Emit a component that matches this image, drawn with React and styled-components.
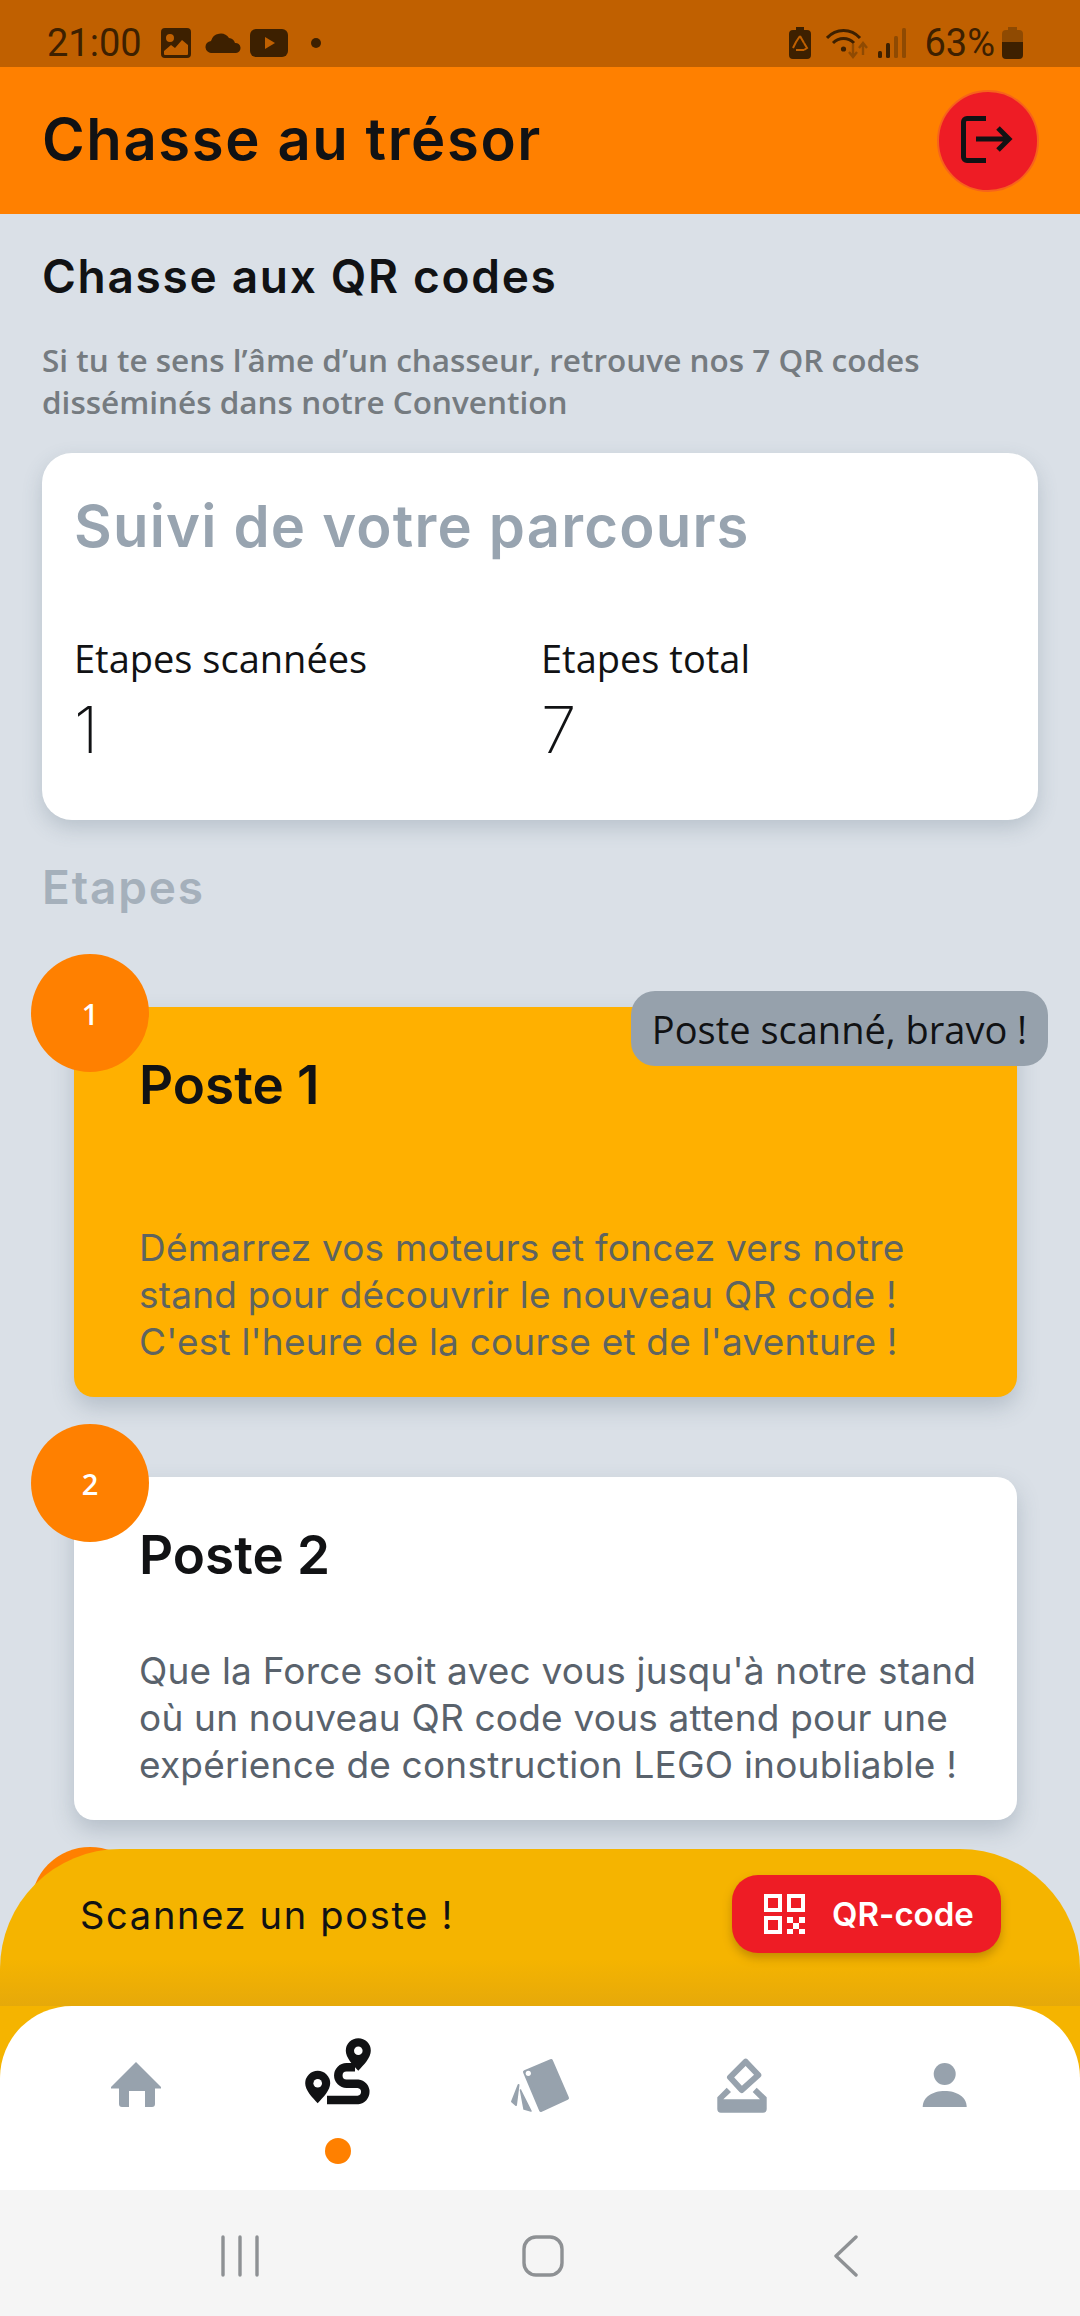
import React from 'react';
import styled, { createGlobalStyle } from 'styled-components';

const GlobalStyle = createGlobalStyle`
  * { box-sizing: border-box; }
  html, body { margin: 0; padding: 0; background: #dae0e7; }
  body { font-family: 'Open Sans', sans-serif; }
`;

const Screen = styled.div`
  width: 1080px;
  height: 2316px;
  display: flex;
  flex-direction: column;
  overflow: hidden;
  background: #dae0e7;
`;

const StatusBar = styled.div`
  height: 67px;
  flex: none;
  padding: 19px 57px 0 47px;
  background: #c06000;
  color: #3d2000;
  display: flex;
  align-items: center;
  justify-content: space-between;
  font: 400 38px Roboto, sans-serif;
`;

const StatusGroup = styled.div`
  display: flex;
  align-items: center;
`;

const StatusTime = styled.span`
  width: 113px;
`;

const StatusPercent = styled.span`
  margin: 0 7px 0 18px;
`;

const Header = styled.header`
  height: 147px;
  flex: none;
  padding: 0 42px;
  background: #ff8000;
  display: flex;
  align-items: center;
  justify-content: space-between;
`;

const HeaderTitle = styled.h1`
  margin: 0 0 3px;
  font: 600 58px/64px Inter, sans-serif;
  letter-spacing: 1.6px;
  color: #111214;
`;

const LogoutButton = styled.button`
  width: 102px;
  height: 102px;
  margin-right: -1px;
  padding: 0;
  border: 2px solid #f7631b;
  border-radius: 50%;
  background: #ee1c25;
  display: flex;
  align-items: center;
  justify-content: center;
`;

const Main = styled.main`
  position: relative;
  flex: 1;
  overflow: hidden;
`;

const Content = styled.div`
  padding: 38px 42px 0;
`;

const PageTitle = styled.h2`
  margin: 0;
  font: 600 46px/48px Inter, sans-serif;
  letter-spacing: 1.7px;
  color: #111214;
`;

const Intro = styled.p`
  margin: 39px 0 30px;
  font: 600 31.5px/42px 'Open Sans', sans-serif;
  color: #757b80;
`;

const ProgressCard = styled.section`
  height: 367px;
  padding: 38px 32px 0;
  background: #fff;
  border-radius: 30px;
  box-shadow: 0 8px 20px rgba(70, 90, 110, 0.22);
`;

const ProgressTitle = styled.h3`
  margin: 0 0 75px;
  font: 600 58px/70px Inter, sans-serif;
  letter-spacing: 1.2px;
  color: #98a4b0;
`;

const Stats = styled.div`
  display: grid;
  grid-template-columns: 467px 1fr;
`;

const StatLabel = styled.div`
  font: 500 38px/44px 'Open Sans', sans-serif;
  color: #111214;
`;

const StatValue = styled.div`
  margin-top: 15px;
  font: 200 64px/70px Inter, sans-serif;
  color: #111214;
`;

const SectionTitle = styled.h3`
  margin: 39px 0;
  font: 600 46px/56px Inter, sans-serif;
  letter-spacing: 1.8px;
  color: #a5b0bb;
`;

const Step = styled.article`
  position: relative;
  margin: 0 21px 27px 32px;
  padding-top: 53px;
`;

const StepNumber = styled.div`
  position: absolute;
  left: -43px;
  top: 0;
  width: 118px;
  height: 118px;
  border-radius: 50%;
  background: #ff8000;
  color: #fff;
  display: flex;
  align-items: center;
  justify-content: center;
  font: 600 29px 'Open Sans', sans-serif;
  z-index: 1;
`;

const StepBadge = styled.div`
  position: absolute;
  right: -31px;
  top: 37px;
  width: 417px;
  height: 75px;
  border-radius: 24px;
  background: #96a1ac;
  color: #111214;
  display: flex;
  align-items: center;
  justify-content: center;
  font: 500 38px 'Open Sans', sans-serif;
  z-index: 1;
`;

const StepCard = styled.div`
  padding: 46px 20px 31px 65px;
  border-radius: 20px;
  background: ${({ $done }) => ($done ? '#ffb000' : '#fff')};
  box-shadow: 0 10px 22px rgba(70, 90, 110, 0.25);
`;

const StepTitle = styled.h4`
  margin: ${({ $spaced }) => ($spaced ? '0 0 107px' : '0 0 60px')};
  font: 600 53px/64px Inter, sans-serif;
  color: #111214;
`;

const StepText = styled.p`
  margin: 0 0 1px;
  font: 400 37px/47px Inter, sans-serif;
  letter-spacing: 0.2px;
  color: ${({ $done }) => ($done ? '#5e6460' : '#59626c')};
`;

const Footer = styled.div`
  position: absolute;
  left: 0;
  right: 0;
  bottom: 0;
  background: #f5b400;
  border-radius: 120px 120px 0 0;
  z-index: 2;
`;

const ScanRow = styled.div`
  height: 157px;
  padding: 26px 79px 53px 80px;
  display: flex;
  align-items: center;
  justify-content: space-between;
  background: linear-gradient(180deg, transparent 70%, #e6a90a 100%);
  border-radius: 120px 120px 0 0;
`;

const ScanText = styled.span`
  margin-top: 2px;
  font: 400 38px Inter, sans-serif;
  letter-spacing: 1.7px;
  color: #111214;
`;

const ScanButton = styled.button`
  width: 269px;
  height: 78px;
  padding: 0 0 0 32px;
  border: 0;
  border-radius: 26px;
  background: #ee1c25;
  box-shadow: 0 5px 10px rgba(120, 80, 0, 0.4);
  color: #fff;
  display: flex;
  align-items: center;
  gap: 27px;
  font: 600 33px Inter, sans-serif;
`;

const TabBar = styled.nav`
  height: 184px;
  padding: 32px 35px 0;
  background: #fff;
  border-radius: 72px 72px 0 0;
  display: grid;
  grid-template-columns: repeat(5, 202px);
`;

const Tab = styled.div`
  display: flex;
  flex-direction: column;
  align-items: center;
  color: ${({ $active }) => ($active ? '#111214' : '#97a2ad')};

  svg {
    overflow: visible;
  }
`;

const TabDot = styled.span`
  width: 26px;
  height: 26px;
  margin-top: 30px;
  border-radius: 50%;
  background: #ff8000;
`;

const NavBar = styled.div`
  height: 126px;
  flex: none;
  padding: 5px 0 0 5px;
  background: #f5f5f5;
  display: grid;
  grid-template-columns: repeat(3, 303px);
  justify-content: center;
  align-items: center;
  justify-items: center;
  color: #8e9194;
`;

const ImageGlyph = () => (
  <svg width="32" height="32" viewBox="0 0 32 32" fill="currentColor" style={{ marginRight: 13 }}>
    <path fillRule="evenodd" d="M5 1h22a4 4 0 0 1 4 4v22a4 4 0 0 1-4 4H5a4 4 0 0 1-4-4V5a4 4 0 0 1 4-4zM4 24v3a1 1 0 0 0 1 1h22a1 1 0 0 0 1-1v-9l-6-5-7 8-4-3-7 6zM10 7a4 4 0 1 0 0 8 4 4 0 0 0 0-8z" />
  </svg>
);

const CloudGlyph = () => (
  <svg width="36" height="20" viewBox="0 0 36 20" fill="currentColor" style={{ marginRight: 9 }}>
    <path d="M7 20a6 6 0 0 1-1-12 10 10 0 0 1 18-3 7 7 0 0 1 6 5 5 5 0 0 1 1 10z" />
  </svg>
);

const VideoGlyph = () => (
  <svg width="38" height="28" viewBox="0 0 38 28" style={{ marginRight: 23 }}>
    <rect width="38" height="28" rx="6" fill="currentColor" />
    <path d="M15 8l10 6-10 6z" fill="#c06000" />
  </svg>
);

const DotGlyph = () => (
  <svg width="10" height="10" viewBox="0 0 10 10" fill="currentColor">
    <circle cx="5" cy="5" r="5" />
  </svg>
);

const SaverGlyph = () => (
  <svg width="22" height="32" viewBox="0 0 22 32" style={{ marginRight: 15 }}>
    <path d="M7 0h8v3h3a4 4 0 0 1 4 4v21a4 4 0 0 1-4 4H4a4 4 0 0 1-4-4V7a4 4 0 0 1 4-4h3z" fill="currentColor" />
    <path d="M11 9l4 7M15 23h-8M4 21l3-6 4-6" fill="none" stroke="#c06000" strokeWidth="2" />
    <path d="M15 23l3-2-3-5" fill="none" stroke="#c06000" strokeWidth="2" />
  </svg>
);

const WifiGlyph = () => (
  <svg width="42" height="32" viewBox="0 0 42 32" fill="none" style={{ marginRight: 10 }}>
    <path d="M1 11C10 1 25 1 34 11" stroke="currentColor" strokeWidth="3" />
    <path d="M7 16c6-6 15-6 21 0" stroke="currentColor" strokeWidth="3" />
    <circle cx="17.5" cy="22" r="2.6" fill="currentColor" />
    <path d="M27 17v12M23 25l4 5 4-5M37 28V17M33 21l4-5 4 5" stroke="#8f4a02" strokeWidth="2.4" />
  </svg>
);

const SignalGlyph = () => (
  <svg width="28" height="30" viewBox="0 0 28 30">
    <rect x="0" y="23" width="4" height="7" rx="1.5" fill="#3d2000" />
    <rect x="8" y="15" width="4" height="15" rx="1.5" fill="#3d2000" />
    <rect x="16" y="8" width="4" height="22" rx="1.5" fill="#8f4a02" />
    <rect x="24" y="0" width="4" height="30" rx="1.5" fill="#8f4a02" />
  </svg>
);

const BatteryGlyph = () => (
  <svg width="21" height="32" viewBox="0 0 21 32">
    <path d="M6 0h9v3h2a4 4 0 0 1 4 4v8H0V7a4 4 0 0 1 4-4h2z" fill="#8f4a02" />
    <path d="M0 15h21v13a4 4 0 0 1-4 4H4a4 4 0 0 1-4-4z" fill="currentColor" />
  </svg>
);

const LogoutGlyph = () => (
  <svg width="60" height="60" viewBox="0 0 60 60" fill="none" stroke="#111214" strokeWidth="5">
    <path d="M28 7.5H9a3.5 3.5 0 0 0-3.5 3.5v35A3.5 3.5 0 0 0 9 49.5h19" />
    <path d="M18 28h32M40 17l11 11-11 11" />
  </svg>
);

const QrGlyph = () => (
  <svg width="41" height="40" viewBox="0 0 41 40" fill="none" stroke="#fff" strokeWidth="4">
    <rect x="2" y="2" width="14" height="14" />
    <rect x="25" y="2" width="14" height="14" />
    <rect x="2" y="24" width="14" height="14" />
    <path d="M23 23h6v6h-6zM35 23h6v6h-6zM29 29h6v6h-6zM23 35h6v5h-6zM35 35h6v5h-6z" fill="#fff" stroke="none" />
  </svg>
);

const HomeIcon = () => (
  <svg width="70" height="70" viewBox="-3 -20 70 70" fill="currentColor">
    <path fillRule="evenodd" d="M32 4l25 25v1.500H51V46a3 3 0 0 1-3 3h-7V33H25v16h-7a3 3 0 0 1-3-3V30.500H7V29z" />
  </svg>
);

const pin = (x, y) => `M${x} ${y - 12.5}a12.5 12.5 0 0 1 12.5 12.5c0 7-7 14-12.5 20c-5.5-6-12.5-13-12.5-20a12.5 12.5 0 0 1 12.5-12.5z`;

const RouteIcon = () => (
  <svg width="70" height="70" viewBox="0 0 70 70" fill="currentColor">
    <path d="M52 29.3H43.5a8.2 8.2 0 0 0 0 16.4H55a8.2 8.2 0 0 1 0 16.3H24" fill="none" stroke="currentColor" strokeWidth="8.5" />
    <path d={pin(14.7, 45.3)} />
    <path d={pin(55.3, 12.7)} />
    <circle cx="14.7" cy="45.3" r="4.3" fill="#fff" />
    <circle cx="55.3" cy="12.7" r="4.3" fill="#fff" />
  </svg>
);

const CardsIcon = () => (
  <svg width="70" height="70" viewBox="0 -10 70 70" fill="currentColor" stroke="currentColor" strokeLinejoin="round">
    <path d="M20 24L46 13L62 50L36 62z" strokeWidth="4" />
    <path d="M13.5 37L7 53.5L11 57z" strokeWidth="2" />
    <path d="M15.5 42L19 61L26 63z" strokeWidth="1.500" />
    <circle cx="23.3" cy="25.3" r="2.6" fill="#fff" stroke="none" />
  </svg>
);

const BallotIcon = () => (
  <svg width="70" height="70" viewBox="-3 -12 70 70" fill="currentColor">
    <path d="M35.7 11.7L48.3 25L31.7 40L20 27.3z" fill="none" stroke="currentColor" strokeWidth="6" strokeLinejoin="round" />
    <path d="M7.3 47.3L16.7 37.7L21 42L13.3 49.3H50L42.7 42L46.7 37.7L56.7 47.3V59a3.7 3.7 0 0 1-3.7 3.7H11A3.7 3.7 0 0 1 7.3 59z" />
  </svg>
);

const PersonIcon = () => (
  <svg width="70" height="70" viewBox="-4 -20 70 70" fill="currentColor">
    <circle cx="31.7" cy="16" r="11" />
    <path d="M9.7 49c0-10 10-16 22-16s22 6 22 16z" />
  </svg>
);

const RecentsIcon = () => (
  <svg width="40" height="42" viewBox="0 0 40 42" fill="none" stroke="currentColor" strokeWidth="3.4" strokeLinecap="round">
    <path d="M3 2v38M20 2v38M37 2v38" />
  </svg>
);

const HomeKeyIcon = () => (
  <svg width="42" height="42" viewBox="0 0 42 42" fill="none" stroke="currentColor" strokeWidth="3.4">
    <rect x="2" y="2" width="38" height="38" rx="12" />
  </svg>
);

const BackIcon = () => (
  <svg width="24" height="42" viewBox="0 0 24 42" fill="none" stroke="currentColor" strokeWidth="3.4" strokeLinecap="round" strokeLinejoin="round">
    <path d="M22 2L2 21l20 19" />
  </svg>
);

const App = () => (
  <Screen>
    <GlobalStyle />
    <StatusBar>
      <StatusGroup>
        <StatusTime>21:00</StatusTime>
        <ImageGlyph />
        <CloudGlyph />
        <VideoGlyph />
        <DotGlyph />
      </StatusGroup>
      <StatusGroup>
        <SaverGlyph />
        <WifiGlyph />
        <SignalGlyph />
        <StatusPercent>63%</StatusPercent>
        <BatteryGlyph />
      </StatusGroup>
    </StatusBar>
    <Header>
      <HeaderTitle>Chasse au trésor</HeaderTitle>
      <LogoutButton>
        <LogoutGlyph />
      </LogoutButton>
    </Header>
    <Main>
      <Content>
        <PageTitle>Chasse aux QR codes</PageTitle>
        <Intro>
          Si tu te sens l’âme d’un chasseur, retrouve nos 7 QR codes
          <br />
          disséminés dans notre Convention
        </Intro>
        <ProgressCard>
          <ProgressTitle>Suivi de votre parcours</ProgressTitle>
          <Stats>
            <div>
              <StatLabel>Etapes scannées</StatLabel>
              <StatValue>1</StatValue>
            </div>
            <div>
              <StatLabel>Etapes total</StatLabel>
              <StatValue>7</StatValue>
            </div>
          </Stats>
        </ProgressCard>
        <SectionTitle>Etapes</SectionTitle>
        <Step>
          <StepNumber>1</StepNumber>
          <StepBadge>Poste scanné, bravo !</StepBadge>
          <StepCard $done>
            <StepTitle $spaced>Poste 1</StepTitle>
            <StepText $done>
              Démarrez vos moteurs et foncez vers notre
              <br />
              stand pour découvrir le nouveau QR code !
              <br />
              C'est l'heure de la course et de l'aventure !
            </StepText>
          </StepCard>
        </Step>
        <Step>
          <StepNumber>2</StepNumber>
          <StepCard>
            <StepTitle>Poste 2</StepTitle>
            <StepText>
              Que la Force soit avec vous jusqu'à notre stand
              <br />
              où un nouveau QR code vous attend pour une
              <br />
              expérience de construction LEGO inoubliable !
            </StepText>
          </StepCard>
        </Step>
        <Step>
          <StepNumber />
        </Step>
      </Content>
      <Footer>
        <ScanRow>
          <ScanText>Scannez un poste !</ScanText>
          <ScanButton>
            <QrGlyph />
            QR-code
          </ScanButton>
        </ScanRow>
        <TabBar>
          <Tab><HomeIcon /></Tab>
          <Tab $active>
            <RouteIcon />
            <TabDot />
          </Tab>
          <Tab><CardsIcon /></Tab>
          <Tab><BallotIcon /></Tab>
          <Tab><PersonIcon /></Tab>
        </TabBar>
      </Footer>
    </Main>
    <NavBar>
      <RecentsIcon />
      <HomeKeyIcon />
      <BackIcon />
    </NavBar>
  </Screen>
);

export default App;
